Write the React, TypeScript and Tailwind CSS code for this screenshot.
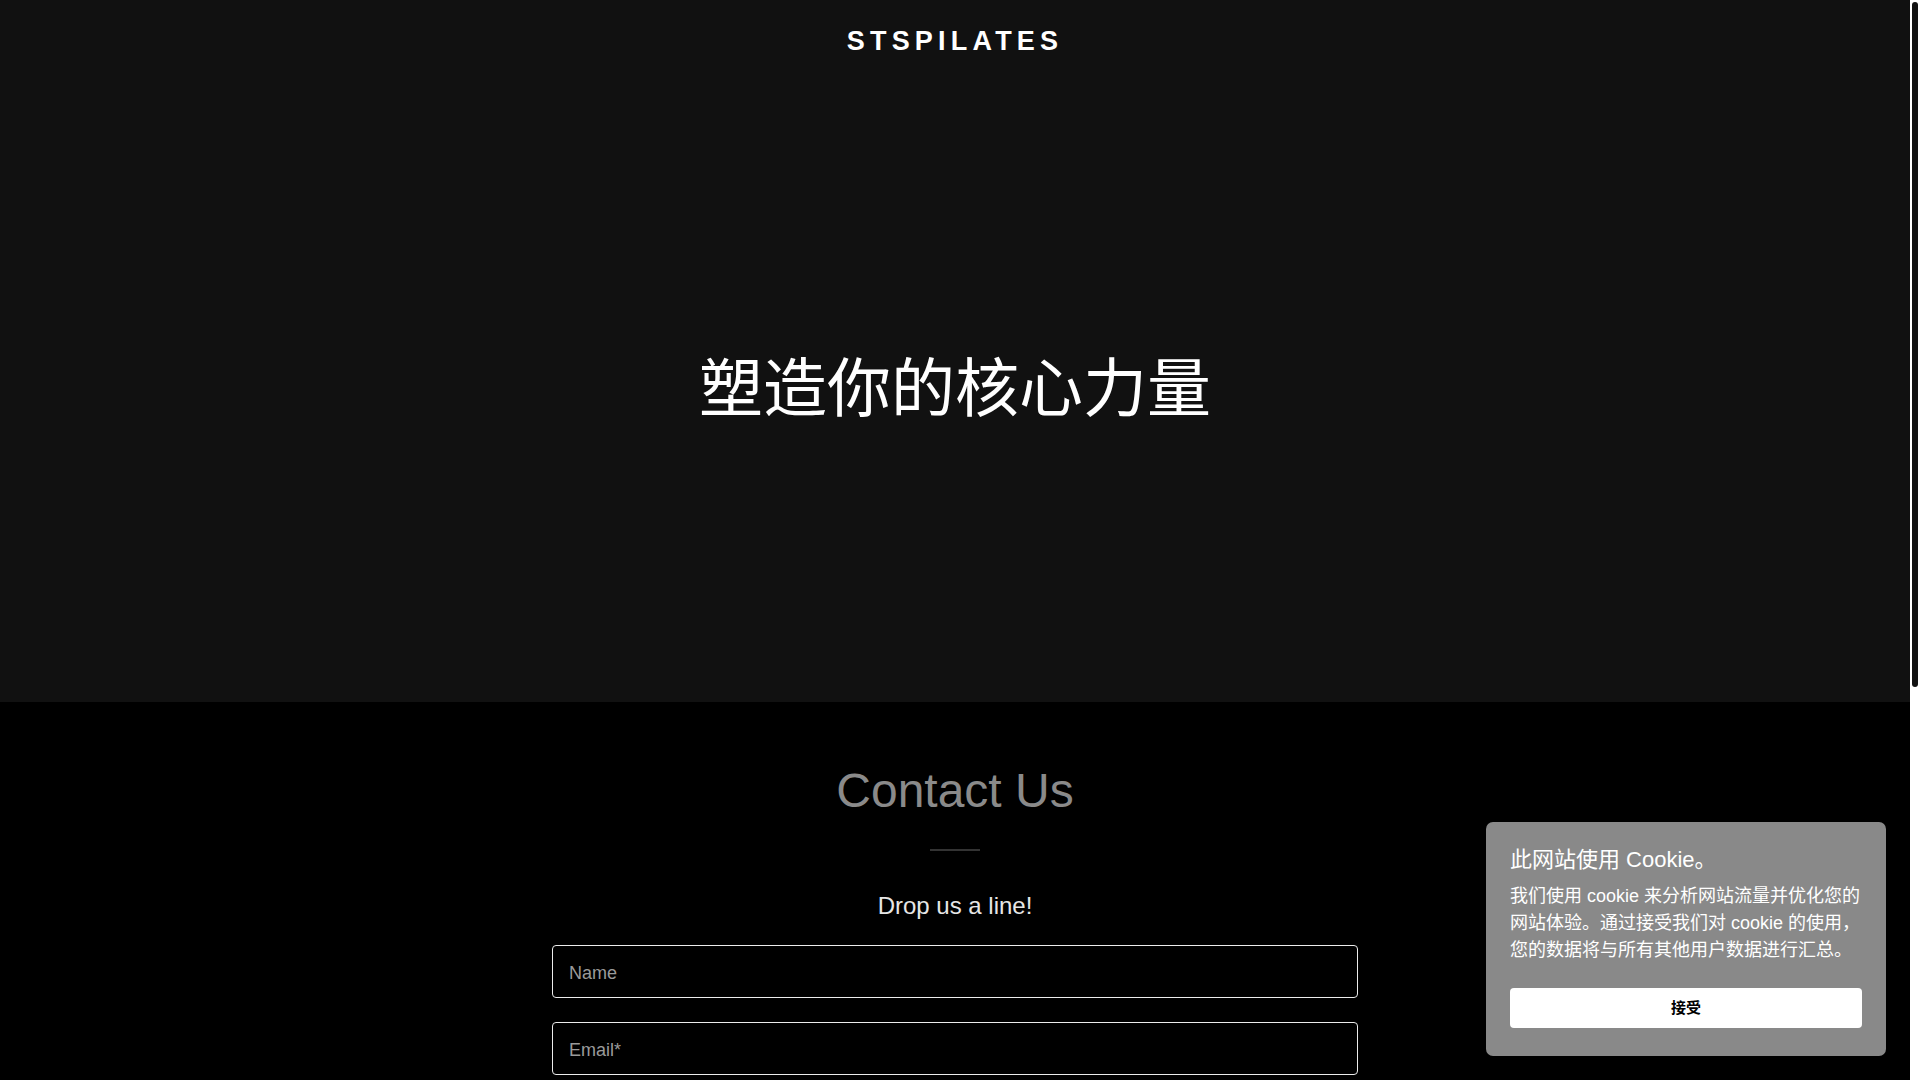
import React from "react";

const sans = "font-['Liberation_Sans','Noto_Sans_CJK_SC',sans-serif]";

function Field({ placeholder, tall }: { placeholder: string; tall?: boolean }) {
  if (tall) {
    return (
      <textarea
        placeholder={placeholder}
        className="block h-[130px] w-full resize-none rounded-[4px] border border-[#ececec] bg-black px-4 py-[14px] text-[18px] text-white outline-none placeholder:text-[#9a9a9a]"
      />
    );
  }
  return (
    <input
      placeholder={placeholder}
      className="block h-[53px] w-full rounded-[4px] border border-[#ececec] bg-black px-4 pt-[4px] text-[18px] text-white outline-none placeholder:text-[#9a9a9a]"
    />
  );
}

export default function App() {
  return (
    <div className={`relative flex h-screen w-full overflow-hidden bg-black ${sans}`}>
      <div className="h-full min-w-0 flex-1 overflow-hidden">
        {/* Hero */}
        <section className="flex h-[702px] flex-col bg-[#111111]">
          <header className="flex h-[83px] items-center justify-center">
            <span className="text-[27px] font-bold leading-none tracking-[5.2px] text-white">
              STSPILATES
            </span>
          </header>
          <div className="flex justify-center pt-[274px]">
            <h1 className="text-[64px] font-normal leading-[64px] text-white">塑造你的核心力量</h1>
          </div>
        </section>

        {/* Contact */}
        <section className="bg-black pt-[59px] pb-[56px]">
          <h2 className="text-center text-[48px] font-normal leading-[60px] text-[#8a8a8a]">Contact Us</h2>
          <div className="mx-auto mt-[28px] h-[2px] w-[50px] bg-[#333333]" />
          <p className="mt-[37px] text-center text-[24px] leading-[36px] text-[#e6e6e6]">Drop us a line!</p>
          <form className="mx-auto mt-[21px] flex w-[806px] flex-col gap-6">
            <Field placeholder="Name" />
            <Field placeholder="Email*" />
            <Field placeholder="Message" tall />
            <label className="flex items-center gap-3 text-[16px] text-[#d0d0d0]">
              <span className="h-[18px] w-[18px] rounded-[3px] border border-[#ececec]" />
              Sign up for our email list for updates, promotions, and more.
            </label>
            <button
              type="button"
              className="h-[56px] w-full rounded-[4px] bg-white text-[16px] font-bold text-black"
            >
              发送
            </button>
          </form>
        </section>

        {/* Footer */}
        <footer className="flex h-[200px] flex-col items-center justify-center gap-3 bg-[#111111]">
          <p className="text-[15px] text-[#a0a0a0]">版权所有 © 2024 STSPILATES - 保留所有权利。</p>
        </footer>
      </div>

      {/* Scrollbar */}
      <div className="h-full w-[10px] shrink-0 bg-white px-[2px] pt-[2px]">
        <div className="h-[685px] w-full rounded-full bg-[#111111]" />
      </div>

      {/* Cookie banner */}
      <div className="absolute bottom-6 right-[34px] w-[400px] rounded-[7px] bg-[#898989] px-6 pt-[24px] pb-[28px] text-white">
        <p className="text-[22px] leading-[28px]">此网站使用 Cookie。</p>
        <p className="mt-[9px] text-[18px] leading-[27px]">
          我们使用 cookie 来分析网站流量并优化您的网站体验。通过接受我们对 cookie 的使用，您的数据将与所有其他用户数据进行汇总。
        </p>
        <button
          type="button"
          className="mt-[24px] flex h-[40px] w-full items-center justify-center rounded-[4px] bg-white text-[15px] font-bold text-black"
        >
          接受
        </button>
      </div>
    </div>
  );
}
